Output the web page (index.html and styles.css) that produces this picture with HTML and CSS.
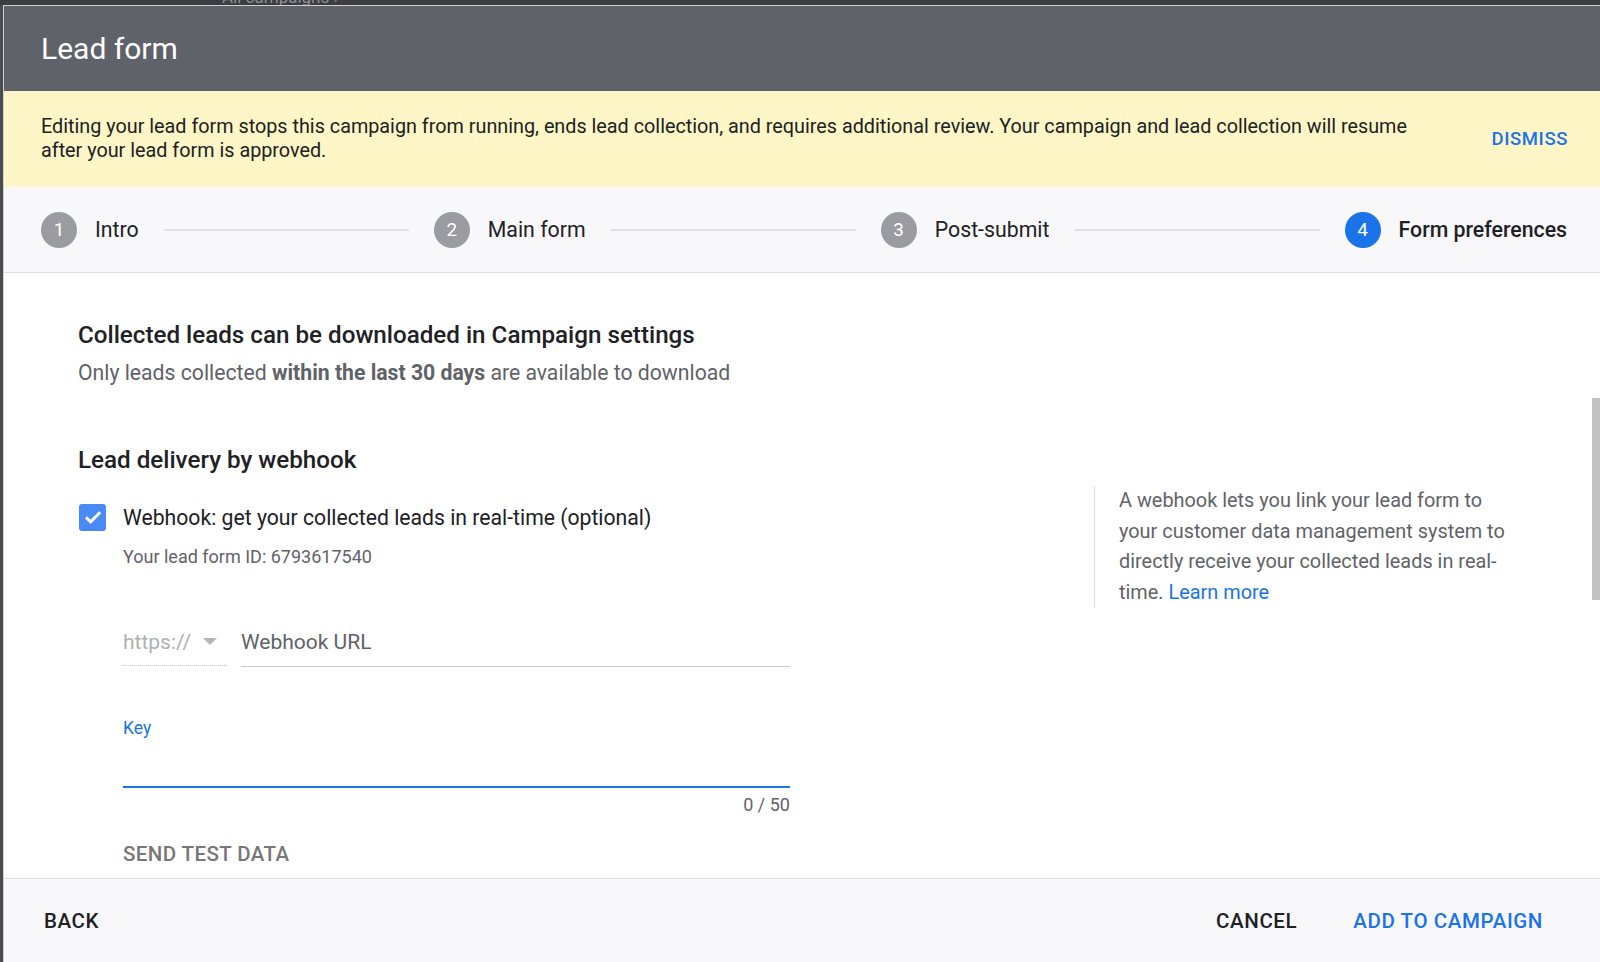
FILE: index.html
```html
<!doctype html>
<html>
<head>
<meta charset="utf-8">
<title>Lead form</title>
<link rel="stylesheet" href="styles.css">
</head>
<body>
<div class="topbar"><span class="crumb">All campaigns &rsaquo;</span></div>
<div class="dialog">
	<div class="dlg_head">Lead form</div>
	<div class="banner">
		<p>Editing your lead form stops this campaign from running, ends lead collection, and requires additional review. Your campaign and lead collection will resume after your lead form is approved.</p>
		<a class="dismiss">DISMISS</a>
	</div>
	<div class="stepper">
		<div class="step"><span class="num">1</span><span class="step_label">Intro</span></div>
		<div class="step_line"></div>
		<div class="step"><span class="num">2</span><span class="step_label">Main form</span></div>
		<div class="step_line"></div>
		<div class="step"><span class="num">3</span><span class="step_label">Post-submit</span></div>
		<div class="step_line"></div>
		<div class="step active"><span class="num">4</span><span class="step_label">Form preferences</span></div>
	</div>
	<div class="content">
		<div class="main_col">
			<h3 class="sec_title">Collected leads can be downloaded in Campaign settings</h3>
			<p class="sec_sub">Only leads collected <b>within the last 30 days</b> are available to download</p>

			<h3 class="sec_title webhook_title">Lead delivery by webhook</h3>
			<label class="check_row">
				<span class="checkbox">
					<svg width="22" height="22" viewBox="0 0 22 22"><path d="M4 11.2l4.6 4.6L18.2 6.2" fill="none" stroke="#fff" stroke-width="3"/></svg>
				</span>
				<span class="check_label">Webhook: get your collected leads in real-time (optional)</span>
			</label>
			<div class="form_id">Your lead form ID: 6793617540</div>

			<div class="url_row">
				<div class="proto">https://
					<svg width="14" height="8" viewBox="0 0 14 8"><path d="M0 0h14L7 7z" fill="#b4b4b4"/></svg>
				</div>
				<div class="url_field">Webhook URL</div>
			</div>

			<div class="key_field">
				<div class="key_label">Key</div>
				<div class="key_input"></div>
			</div>
			<div class="counter">0 / 50</div>

			<div class="test_btn">SEND TEST DATA</div>
		</div>
		<div class="aside">
			A webhook lets you link your lead form to your customer data management system to directly receive your collected leads in real-time. <a class="link">Learn more</a>
		</div>
		<div class="scroll_thumb"></div>
	</div>
	<div class="footer">
		<a class="btn">BACK</a>
		<div class="spacer"></div>
		<a class="btn">CANCEL</a>
		<a class="btn primary">ADD TO CAMPAIGN</a>
	</div>
</div>
</body>
</html>
```
FILE: styles.css
```css
*{margin:0; padding:0; box-sizing:border-box;}
body{background:#4b4c50; font-family:Roboto, "Liberation Sans", sans-serif; color:#202124; overflow:hidden;}

.topbar{height:5px; overflow:hidden; background:#3c3d41;}
.topbar .crumb{display:block; margin:-13px 0 0 222px; color:#8d8e92; font-size:17px; line-height:20px;}

.dialog{margin-left:3px; height:957px; display:flex; flex-direction:column; border-top:1px solid #cfd0d3; border-left:1px solid #cfd0d3; background:#fff;}

.dlg_head{height:85px; background:#5f6269; color:#fff; font-size:30px; padding-left:37px; display:flex; align-items:center;}

.banner{height:96px; background:#fef6c6; display:flex; align-items:center; padding:0 32px 0 37px;}
.banner p{flex:1; font-size:19.8px; line-height:24px; color:#202124; padding-right:50px;}
.banner .dismiss{color:#1a73e8; font-size:18.5px; font-weight:500; letter-spacing:0.6px;}

.stepper{height:86px; background:#f8f7fa; border-bottom:1px solid #dcdce0; display:flex; align-items:center; padding:0 33px 0 37px;}
.step{display:flex; align-items:center;}
.step .num{width:36px; height:36px; border-radius:50%; background:#9a9ca1; color:#fff; font-size:19px; display:flex; align-items:center; justify-content:center;}
.step.active .num{background:#1a73e8;}
.step_label{font-size:21.3px; margin-left:18px; color:#202124;}
.step.active .step_label{font-weight:500;}
.step_line{flex:1; height:2px; background:#e2e2e6; margin:0 25px;}

.content{flex:1; position:relative; display:flex; padding:47px 0 0 74px; overflow:hidden;}
.main_col{width:712px;}
.sec_title{font-size:24.2px; font-weight:500; line-height:30px;}
.sec_sub{font-size:21.2px; line-height:28px; color:#5f6368; margin-top:9px;}
.sec_sub b{font-weight:700;}
.webhook_title{margin-top:58px;}

.check_row{display:flex; align-items:center; margin-top:28px; height:28px;}
.checkbox{width:27px; height:27px; border-radius:3px; background:#4a8af4; display:flex; align-items:center; justify-content:center; margin-left:1px;}
.check_label{font-size:21.2px; margin-left:17px;}
.form_id{font-size:18px; line-height:22px; color:#5f6368; margin:15px 0 0 45px;}

.url_row{display:flex; margin:58px 0 0 45px;}
.proto{width:104px; height:40px; line-height:32px; font-size:21px; color:#b0b0b0; border-bottom:1px dotted #c8c8c8; display:flex; align-items:center; align-self:flex-start; padding-bottom:8px;}
.proto svg{margin-left:12px;}
.url_field{flex:1; margin-left:14px; height:41px; line-height:32px; font-size:21px; color:#5f6368; border-bottom:1px solid #c9cacd; padding-bottom:8px;}

.key_field{margin:51px 0 0 45px;}
.key_label{font-size:17.5px; line-height:20px; color:#1a73e8;}
.key_input{height:50px; border-bottom:2px solid #1a73e8;}
.counter{margin-top:7px; text-align:right; font-size:18px; line-height:20px; color:#5f6368;}

.test_btn{margin:27px 0 0 45px; font-size:20.5px; line-height:24px; font-weight:500; color:#777; letter-spacing:0.4px;}

.aside{width:416px; margin:166px 0 0 304px; align-self:flex-start; border-left:1px solid #dadce0; padding-left:24px; font-size:19.9px; line-height:30.5px; color:#5f6368;}
.aside .link{color:#1a73e8;}

.scroll_thumb{position:absolute; right:0; top:125px; width:8px; height:202px; background:#c1c1c1;}

.footer{height:84px; background:#f8f7fa; border-top:1px solid #dcdce0; display:flex; align-items:center; padding:0 57px 0 40px;}
.footer .btn{font-size:20.5px; font-weight:500; letter-spacing:0.6px; color:#202124;}
.footer .spacer{flex:1;}
.footer .btn.primary{color:#1a73e8; margin-left:56px;}
```
